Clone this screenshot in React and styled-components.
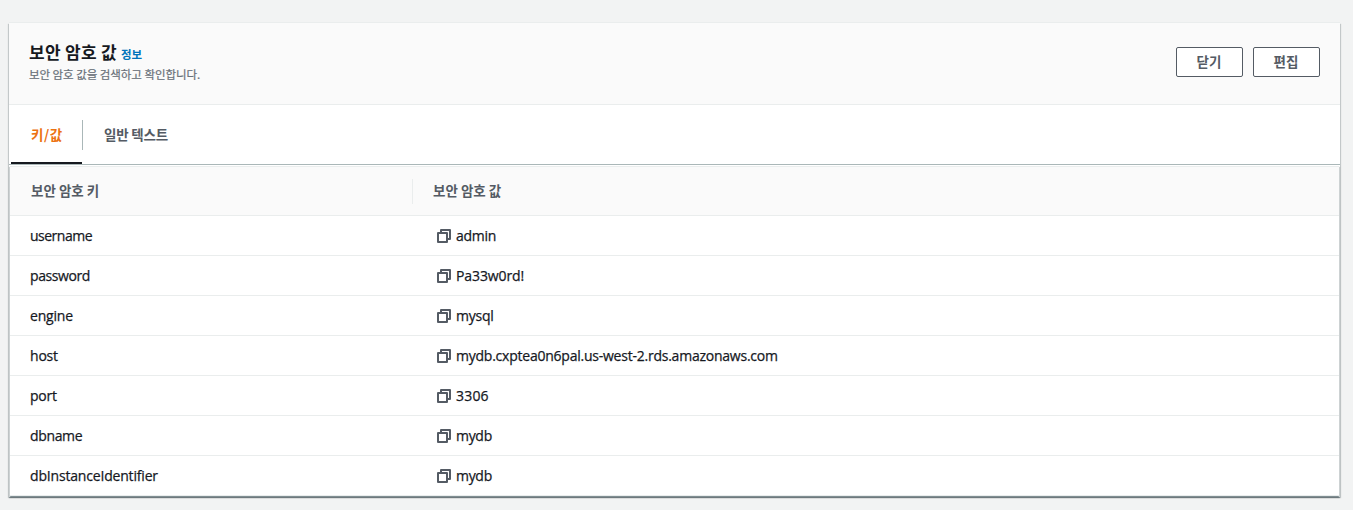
import React from "react";
import styled, { createGlobalStyle } from "styled-components";

const GlobalStyle = createGlobalStyle`
  * { box-sizing: border-box; }
  body {
    margin: 0;
    background: #f2f3f3;
    color: #16191f;
    font-family: "Open Sans", "Noto Sans CJK KR", sans-serif;
    font-size: 14px;
  }
`;

const Page = styled.main`
  height: 510px;
  padding: 23px 13px 0 9px;
`;

const Panel = styled.section`
  height: 474px;
  background: #fff;
  box-shadow: 0 1px 1px 0 rgba(0, 28, 36, 0.3), 1px 1px 1px 0 rgba(0, 28, 36, 0.15),
    -1px 1px 1px 0 rgba(0, 28, 36, 0.15), 0 -1px 0 0 #eaeded;
`;

const Header = styled.header`
  display: flex;
  justify-content: space-between;
  height: 82px;
  padding: 17px 20px 0;
  background: #fafafa;
  border-bottom: 1px solid #eaeded;
`;

const TitleRow = styled.div`
  display: flex;
  align-items: baseline;
  gap: 4px;
  height: 25px;
  line-height: 24px;
`;

const Title = styled.h2`
  margin: 0;
  font-family: "Noto Sans CJK KR", sans-serif;
  font-size: 17px;
  font-weight: 700;
  letter-spacing: 0.3px;
`;

const Info = styled.a`
  color: #0073bb;
  font-family: "Noto Sans CJK KR", sans-serif;
  font-size: 11.5px;
  font-weight: 700;
`;

const Description = styled.p`
  margin: 0;
  color: #687078;
  font-family: "Noto Sans CJK KR", sans-serif;
  font-size: 11.5px;
  letter-spacing: -0.05px;
  line-height: 18px;
  -webkit-text-stroke: 0.2px currentColor;
`;

const Actions = styled.div`
  display: flex;
  gap: 10px;
  padding-top: 7px;
`;

const Button = styled.button`
  width: 67px;
  height: 30px;
  padding: 0 1px 2px 0;
  color: #545b64;
  background: #fff;
  border: 1px solid #545b64;
  border-radius: 2px;
  font-family: "Noto Sans CJK KR", sans-serif;
  font-size: 13.5px;
  font-weight: 700;
  line-height: 26px;
`;

const Tabs = styled.nav`
  display: flex;
  height: 60px;
  padding-left: 2px;
  border-bottom: 1px solid #aab7b8;
`;

const Tab = styled.a`
  display: flex;
  align-items: center;
  width: ${(p) => (p.$active ? "71px" : "108px")};
  padding-left: ${(p) => (p.$active ? "20px" : "21px")};
  border-bottom: 2px solid ${(p) => (p.$active ? "#16191f" : "transparent")};
  color: ${(p) => (p.$active ? "#ec7211" : "#545b64")};
  font-family: "Noto Sans CJK KR", sans-serif;
  font-size: 13.5px;
  font-weight: 700;
  letter-spacing: ${(p) => (p.$active ? "0.5px" : "-0.2px")};
`;

const TabDivider = styled.span`
  width: 1px;
  height: 30px;
  margin-top: 15px;
  background: #aab7b8;
`;

const Table = styled.div`
  height: 330px;
  margin: 1px 1px 0;
  border-top: 1px solid #eaeded;
  box-shadow: 0 1px 1px 0 rgba(0, 28, 36, 0.3), 1px 1px 1px 0 rgba(0, 28, 36, 0.15),
    -1px 1px 1px 0 rgba(0, 28, 36, 0.15);
`;

const Row = styled.div`
  display: grid;
  grid-template-columns: 403px 1fr;
  align-items: center;
  height: 40px;
  border-bottom: 1px solid #eaeded;
`;

const HeadRow = styled(Row)`
  height: 49px;
  background: #fafafa;
`;

const HeadCell = styled.div`
  display: flex;
  align-items: center;
  height: 25px;
  padding: 0 0 2px ${(p) => (p.$divided ? "21px" : "20px")};
  border-right: ${(p) => (p.$divided ? "1px solid #eaeded" : "0")};
  color: #545b64;
  font-family: "Noto Sans CJK KR", sans-serif;
  font-size: 13.5px;
  font-weight: 700;
`;

const Cell = styled.div`
  display: flex;
  align-items: center;
  gap: 5px;
  padding-left: ${(p) => (p.$copyable ? "24px" : "20px")};
`;

const CellText = styled.span`
  letter-spacing: ${(p) => p.$tracking}px;
  -webkit-text-stroke: 0.25px currentColor;
`;

const Glyph = styled.svg`
  display: block;
  width: 14px;
  height: 14px;
  fill: none;
  stroke: #545b64;
  stroke-width: 2;
  stroke-linejoin: round;
`;

const CopyIcon = () => (
  <Glyph viewBox="0 0 14 14" aria-hidden="true">
    <path d="M1 4h9v9H1z" />
    <path d="M4 4V1h9v9h-3" />
  </Glyph>
);

const entries = [
  { name: "username", value: "admin", nameTracking: -0.5, valueTracking: -0.25 },
  { name: "password", value: "Pa33w0rd!", nameTracking: -0.42, valueTracking: -0.1 },
  { name: "engine", value: "mysql", nameTracking: -0.2, valueTracking: -0.25 },
  {
    name: "host",
    value: "mydb.cxptea0n6pal.us-west-2.rds.amazonaws.com",
    nameTracking: -0.2,
    valueTracking: -0.235,
  },
  { name: "port", value: "3306", nameTracking: -0.2, valueTracking: 0.2 },
  { name: "dbname", value: "mydb", nameTracking: -0.35, valueTracking: -0.3 },
  { name: "dbInstanceIdentifier", value: "mydb", nameTracking: -0.18, valueTracking: -0.3 },
];

export default function App() {
  return (
    <Page>
      <GlobalStyle />
      <Panel>
        <Header>
          <div>
            <TitleRow>
              <Title>보안 암호 값</Title>
              <Info>정보</Info>
            </TitleRow>
            <Description>보안 암호 값을 검색하고 확인합니다.</Description>
          </div>
          <Actions>
            <Button>닫기</Button>
            <Button>편집</Button>
          </Actions>
        </Header>
        <Tabs>
          <Tab $active>키/값</Tab>
          <TabDivider />
          <Tab>일반 텍스트</Tab>
        </Tabs>
        <Table>
          <HeadRow>
            <HeadCell $divided>보안 암호 키</HeadCell>
            <HeadCell>보안 암호 값</HeadCell>
          </HeadRow>
          {entries.map((entry) => (
            <Row key={entry.name}>
              <Cell>
                <CellText $tracking={entry.nameTracking}>{entry.name}</CellText>
              </Cell>
              <Cell $copyable>
                <CopyIcon />
                <CellText $tracking={entry.valueTracking}>{entry.value}</CellText>
              </Cell>
            </Row>
          ))}
        </Table>
      </Panel>
    </Page>
  );
}
